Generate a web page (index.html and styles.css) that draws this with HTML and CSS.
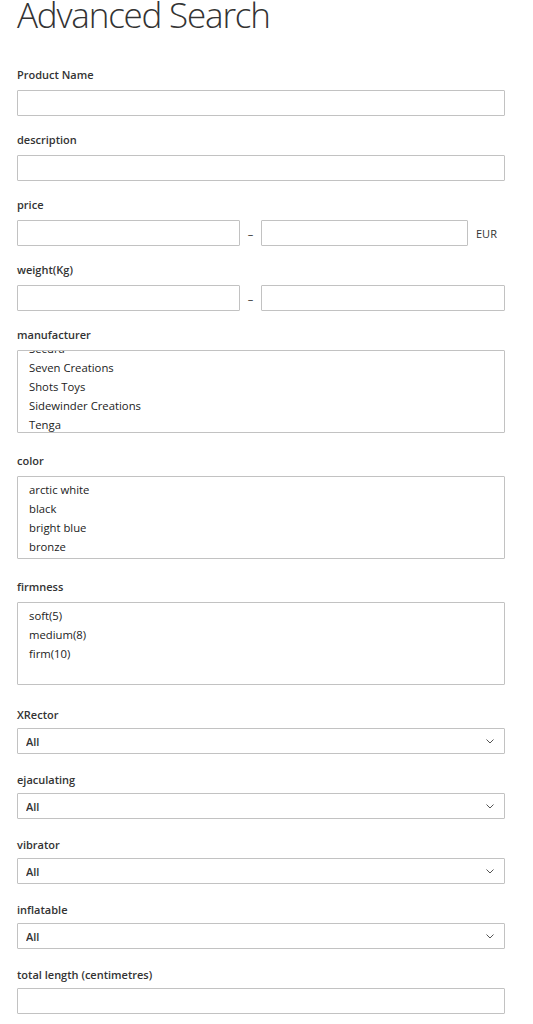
FILE: index.html
```html
<!DOCTYPE html>
<html lang="en">
<head>
<meta charset="utf-8">
<title>Advanced Search</title>
<link rel="stylesheet" href="styles.css">
</head>
<body>
<main class="page">
  <h1 class="title">Advanced Search</h1>
  <form class="form">
    <div class="field">
      <label class="label">Product Name</label>
      <input class="input" type="text">
    </div>
    <div class="field">
      <label class="label">description</label>
      <input class="input" type="text">
    </div>
    <div class="field">
      <label class="label">price</label>
      <div class="range range-price">
        <input class="input" type="text">
        <span class="sep">–</span>
        <input class="input" type="text">
        <span class="unit">EUR</span>
      </div>
    </div>
    <div class="field">
      <label class="label">weight(Kg)</label>
      <div class="range">
        <input class="input" type="text">
        <span class="sep">–</span>
        <input class="input" type="text">
      </div>
    </div>
    <div class="field field-list">
      <label class="label">manufacturer</label>
      <div class="listbox">
        <ul class="options options-scrolled">
          <li>Secura</li>
          <li>Seven Creations</li>
          <li>Shots Toys</li>
          <li>Sidewinder Creations</li>
          <li>Tenga</li>
        </ul>
      </div>
    </div>
    <div class="field field-list">
      <label class="label">color</label>
      <div class="listbox">
        <ul class="options">
          <li>arctic white</li>
          <li>black</li>
          <li>bright blue</li>
          <li>bronze</li>
        </ul>
      </div>
    </div>
    <div class="field field-list field-list-last">
      <label class="label">firmness</label>
      <div class="listbox">
        <ul class="options">
          <li>soft(5)</li>
          <li>medium(8)</li>
          <li>firm(10)</li>
        </ul>
      </div>
    </div>
    <div class="field field-select">
      <label class="label">XRector</label>
      <div class="select-wrap">
        <select class="select"><option>All</option></select>
        <svg class="chev" width="8" height="5" viewBox="0 0 8 5"><path d="M0.5 0.5l3.5 3.5 3.5-3.5" fill="none" stroke="#555" stroke-width="1"/></svg>
      </div>
    </div>
    <div class="field field-select">
      <label class="label">ejaculating</label>
      <div class="select-wrap">
        <select class="select"><option>All</option></select>
        <svg class="chev" width="8" height="5" viewBox="0 0 8 5"><path d="M0.5 0.5l3.5 3.5 3.5-3.5" fill="none" stroke="#555" stroke-width="1"/></svg>
      </div>
    </div>
    <div class="field field-select">
      <label class="label">vibrator</label>
      <div class="select-wrap">
        <select class="select"><option>All</option></select>
        <svg class="chev" width="8" height="5" viewBox="0 0 8 5"><path d="M0.5 0.5l3.5 3.5 3.5-3.5" fill="none" stroke="#555" stroke-width="1"/></svg>
      </div>
    </div>
    <div class="field field-select">
      <label class="label">inflatable</label>
      <div class="select-wrap">
        <select class="select"><option>All</option></select>
        <svg class="chev" width="8" height="5" viewBox="0 0 8 5"><path d="M0.5 0.5l3.5 3.5 3.5-3.5" fill="none" stroke="#555" stroke-width="1"/></svg>
      </div>
    </div>
    <div class="field field-select">
      <label class="label">total length (centimetres)</label>
      <input class="input" type="text">
    </div>
  </form>
</main>
</body>
</html>
```
FILE: styles.css
```css
* { box-sizing: border-box; }
html, body { margin: 0; padding: 0; background: #fff; }
body {
  font-family: "Open Sans", "Liberation Sans", sans-serif;
  color: #333;
  overflow: hidden;
}
.page {
  width: 505px;
  padding-left: 17px;
}
.title {
  margin: -3px 0 34px;
  font-size: 35px;
  line-height: 36px;
  font-weight: 300;
  color: #333;
  letter-spacing: -1.2px;
}
.form { margin: 0; }
.field { margin-bottom: 16px; }
.label {
  display: block;
  font-size: 11px;
  line-height: 16px;
  font-weight: 600;
  color: #333;
  margin-bottom: 7px;
}
.input {
  display: block;
  width: 100%;
  height: 26px;
  margin: 0;
  border: 1px solid #c2c2c2;
  border-radius: 1px;
  background: #fff;
  padding: 0 9px;
  font-family: inherit;
  font-size: 11px;
  outline: none;
}
.range {
  display: grid;
  grid-template-columns: 223px 21px 1fr;
  align-items: center;
}
.range-price {
  grid-template-columns: 223px 21px 207px 37px;
}
.sep {
  text-align: center;
  font-size: 11px;
  color: #333;
}
.unit {
  padding-left: 8px;
  font-size: 11px;
  color: #333;
}
.field-list { margin-bottom: 20px; }
.field-list-last { margin-bottom: 22px; }
.listbox {
  height: 83px;
  border: 1px solid #c2c2c2;
  border-radius: 1px;
  overflow: hidden;
  padding: 3px 11px;
}
.options {
  list-style: none;
  margin: 0;
  padding: 0;
  font-size: 11.3px;
  line-height: 19px;
  color: #222;
}
.options-scrolled { margin-top: -15px; }
.field-select { margin-bottom: 18px; }
.field-select .label { margin-bottom: 5px; }
.select-wrap { position: relative; }
.select {
  display: block;
  width: 100%;
  height: 26px;
  margin: 0;
  border: 1px solid #c2c2c2;
  border-radius: 1px;
  background: #fff;
  padding: 0 8px;
  font-family: inherit;
  font-size: 11px;
  font-weight: 600;
  color: #333;
  appearance: none;
  -webkit-appearance: none;
  outline: none;
}
.chev {
  position: absolute;
  right: 11px;
  top: 11px;
  pointer-events: none;
}
```
